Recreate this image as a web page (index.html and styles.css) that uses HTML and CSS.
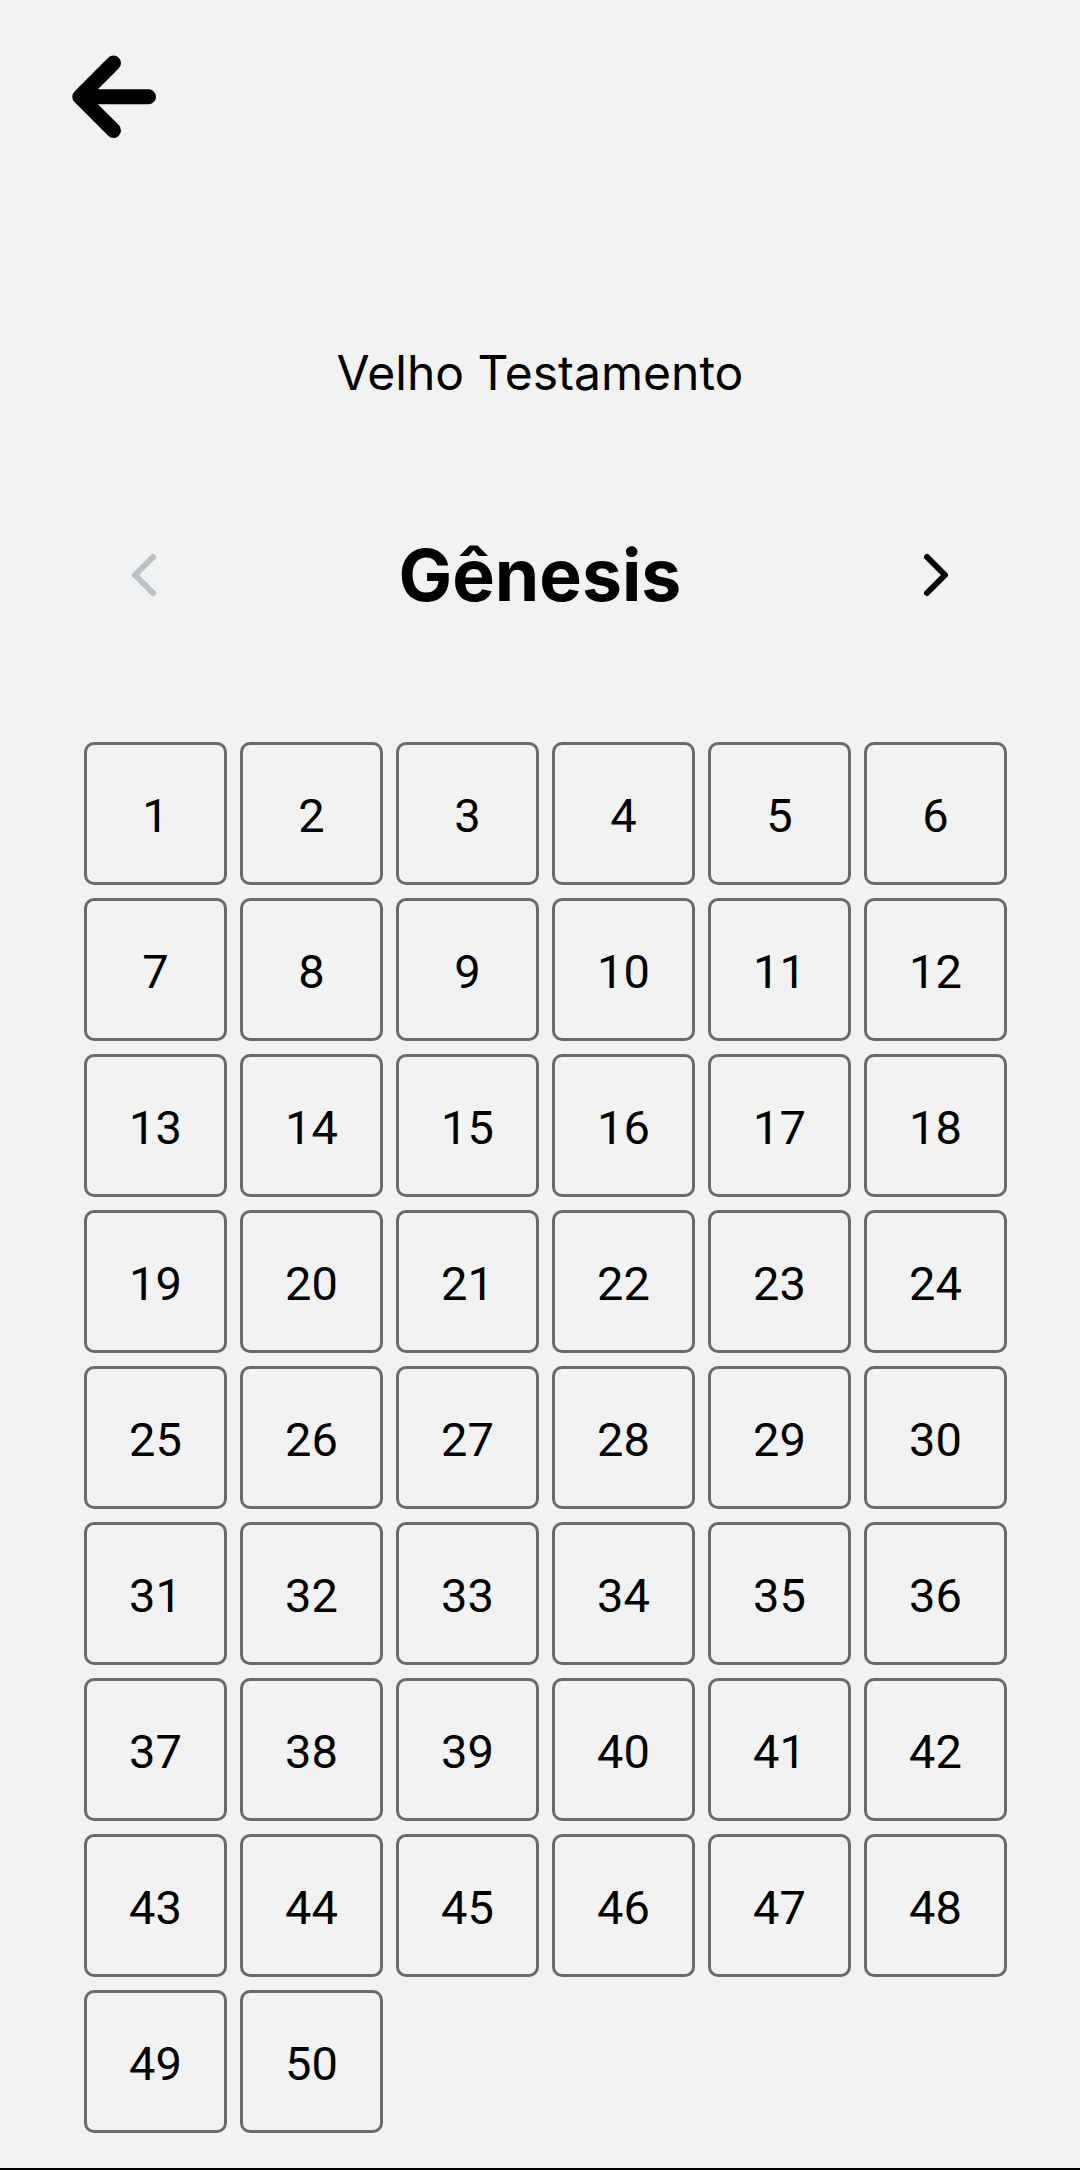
FILE: index.html
```html
<!DOCTYPE html>
<html lang="pt">
<head>
<meta charset="utf-8">
<title>Gênesis</title>
<link rel="stylesheet" href="styles.css">
</head>
<body>
<div class="screen">
  <header class="header">
    <button class="back" aria-label="Voltar">
      <svg width="100" height="100" viewBox="0 0 100 100">
        <path d="M49.5 15 L15.8 48.7 L49.5 82.4 M16 48.7 H84.5" fill="none" stroke="#000" stroke-width="15" stroke-linecap="round" stroke-linejoin="round"/>
      </svg>
    </button>
  </header>

  <h2 class="testament">Velho Testamento</h2>

  <div class="book-nav">
    <button class="chev chev-disabled" aria-label="Anterior">
      <svg width="64" height="64" viewBox="0 0 512 512">
        <path d="M328 112L184 256l144 144" fill="none" stroke="currentColor" stroke-width="48" stroke-linecap="round" stroke-linejoin="round"/>
      </svg>
    </button>
    <h1 class="book">Gênesis</h1>
    <button class="chev" aria-label="Próximo">
      <svg width="64" height="64" viewBox="0 0 512 512">
        <path d="M184 112l144 144-144 144" fill="none" stroke="currentColor" stroke-width="48" stroke-linecap="round" stroke-linejoin="round"/>
      </svg>
    </button>
  </div>

  <div class="chapters">
    <div class="cell">1</div><div class="cell">2</div><div class="cell">3</div><div class="cell">4</div><div class="cell">5</div><div class="cell">6</div>
    <div class="cell">7</div><div class="cell">8</div><div class="cell">9</div><div class="cell">10</div><div class="cell">11</div><div class="cell">12</div>
    <div class="cell">13</div><div class="cell">14</div><div class="cell">15</div><div class="cell">16</div><div class="cell">17</div><div class="cell">18</div>
    <div class="cell">19</div><div class="cell">20</div><div class="cell">21</div><div class="cell">22</div><div class="cell">23</div><div class="cell">24</div>
    <div class="cell">25</div><div class="cell">26</div><div class="cell">27</div><div class="cell">28</div><div class="cell">29</div><div class="cell">30</div>
    <div class="cell">31</div><div class="cell">32</div><div class="cell">33</div><div class="cell">34</div><div class="cell">35</div><div class="cell">36</div>
    <div class="cell">37</div><div class="cell">38</div><div class="cell">39</div><div class="cell">40</div><div class="cell">41</div><div class="cell">42</div>
    <div class="cell">43</div><div class="cell">44</div><div class="cell">45</div><div class="cell">46</div><div class="cell">47</div><div class="cell">48</div>
    <div class="cell">49</div><div class="cell">50</div>
  </div>

  <div class="bottom-edge"></div>
</div>
</body>
</html>
```

FILE: styles.css
```css
html, body {
  margin: 0;
  padding: 0;
  background: #f2f2f2;
}

.screen {
  min-height: 100vh;
  display: flex;
  flex-direction: column;
  font-family: Inter, "Noto Sans", sans-serif;
  color: #000;
}

.header {
  padding: 48px 0 0 64px;
  height: 100px;
}

.back {
  display: block;
  padding: 0;
  margin: 0;
  border: 0;
  background: none;
  width: 100px;
  height: 100px;
}

.back svg {
  display: block;
}

.testament {
  margin: 196px 0 0;
  font-size: 48px;
  font-weight: 400;
  line-height: 58px;
  text-align: center;
}

.book-nav {
  margin-top: 128px;
  padding: 0 112px;
  display: flex;
  align-items: center;
  justify-content: space-between;
}

.chev {
  padding: 0;
  margin: 0;
  border: 0;
  background: none;
  width: 64px;
  height: 64px;
  color: #000;
}

.chev svg {
  display: block;
}

.chev-disabled {
  color: #b7c1c8;
}

.book {
  margin: 0;
  font-size: 71.5px;
  font-weight: 700;
  line-height: 89px;
  padding-top: 1px;
  height: 88px;
}

.chapters {
  margin-top: 123px;
  padding-left: 84px;
  display: grid;
  grid-template-columns: repeat(6, 143px);
  grid-auto-rows: 143px;
  gap: 13px;
}

.cell {
  box-sizing: border-box;
  border: 3px solid #656c70;
  border-radius: 10px;
  display: flex;
  align-items: center;
  justify-content: center;
  font-family: Roboto, "Liberation Sans", sans-serif;
  font-size: 47px;
  line-height: 1;
  padding-top: 4px;
  color: #000;
}

.bottom-edge {
  margin-top: auto;
  height: 2px;
  background: #000;
}
```
